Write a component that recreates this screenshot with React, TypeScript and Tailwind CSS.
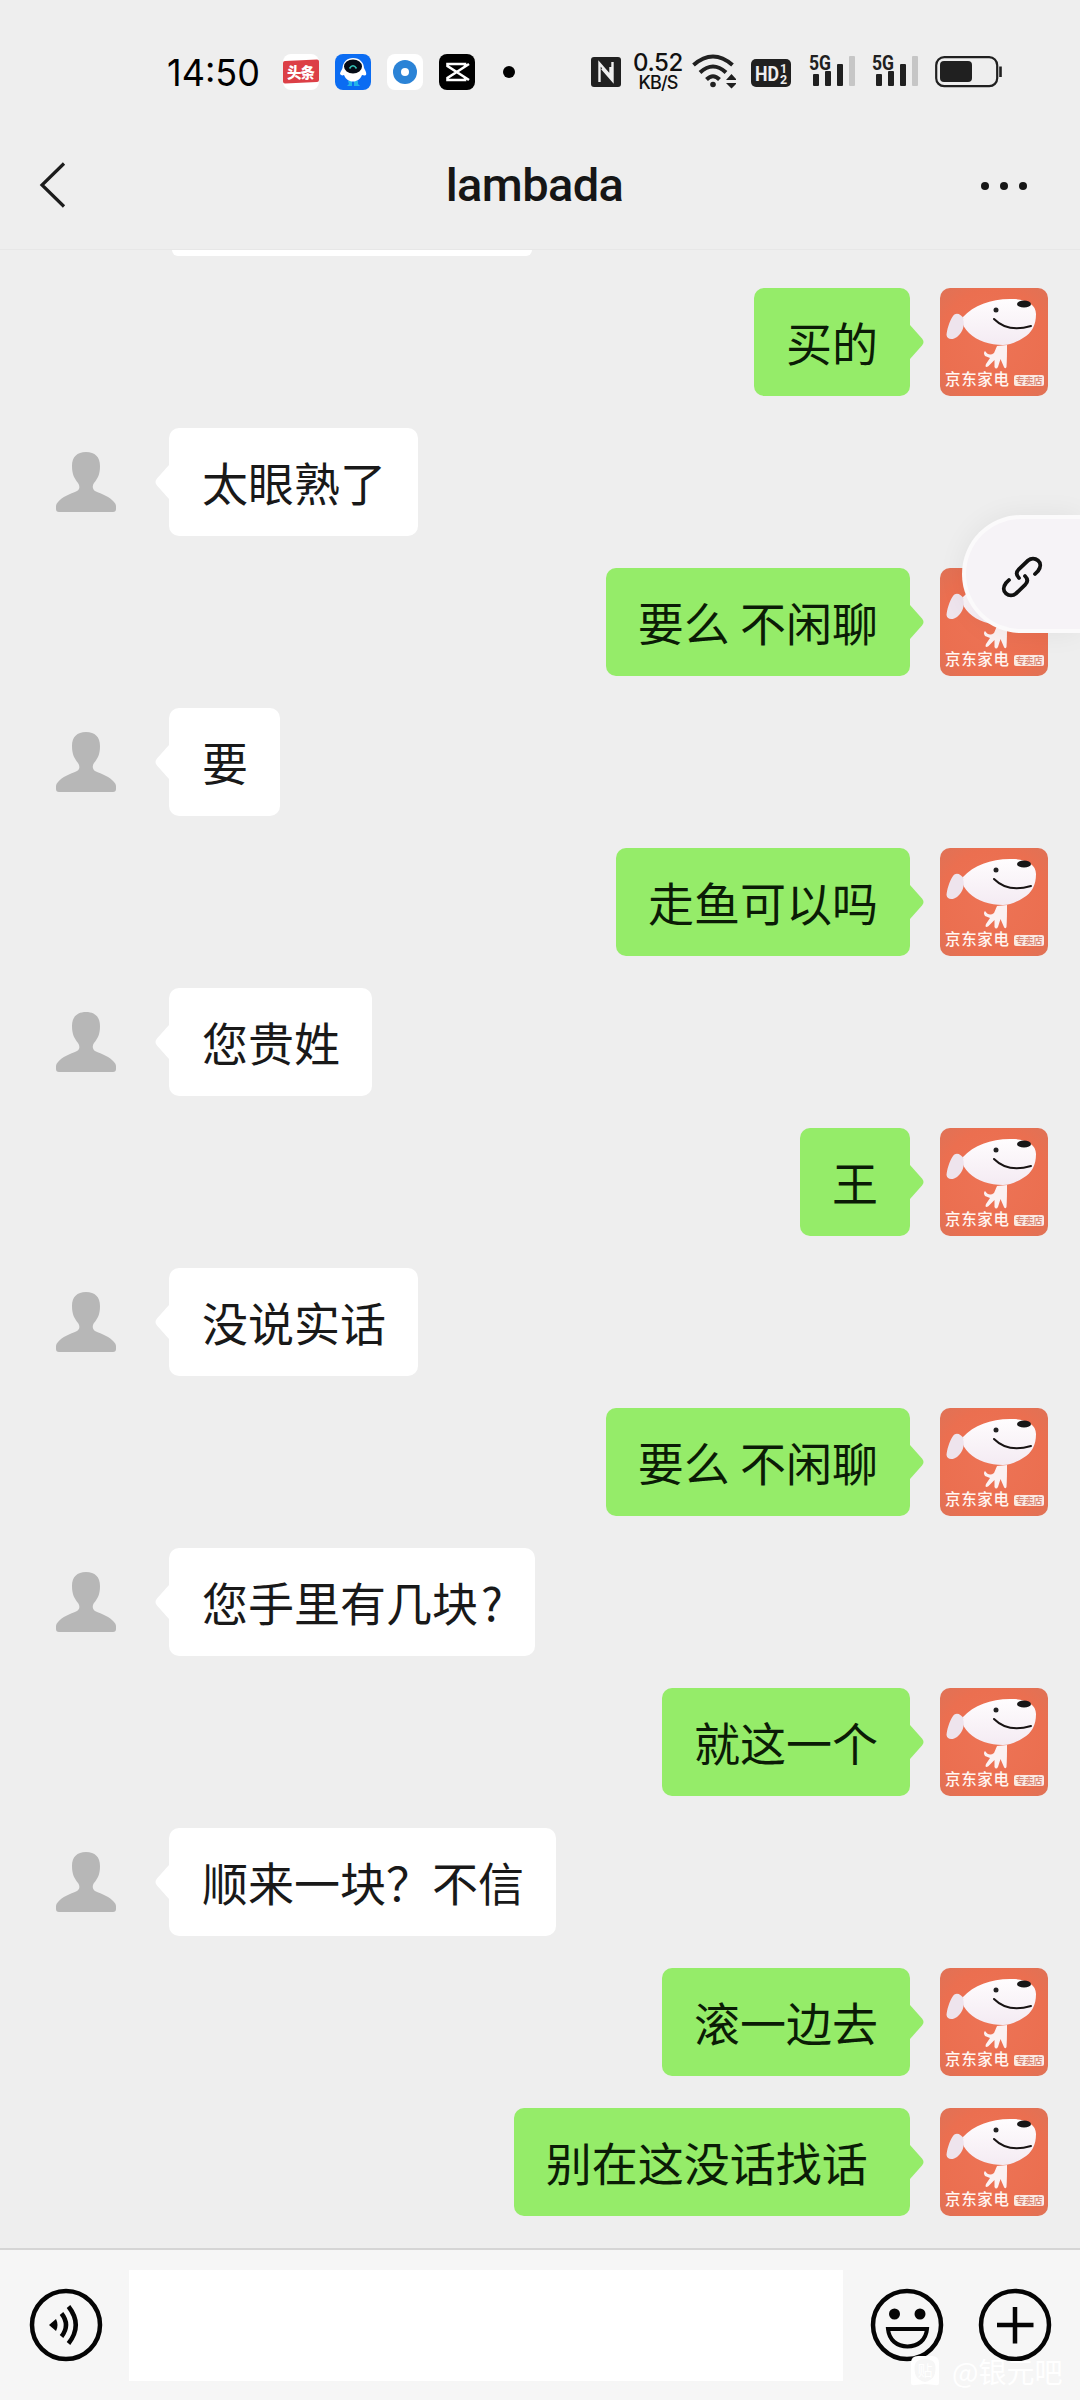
const messages = [
  { mine: true, text: "买的" },
  { mine: false, text: "太眼熟了" },
  { mine: true, text: "要么 不闲聊" },
  { mine: false, text: "要" },
  { mine: true, text: "走鱼可以吗" },
  { mine: false, text: "您贵姓" },
  { mine: true, text: "王" },
  { mine: false, text: "没说实话" },
  { mine: true, text: "要么 不闲聊" },
  { mine: false, text: "您手里有几块\u200a?" },
  { mine: true, text: "就这一个" },
  { mine: false, text: "顺来一块？不信" },
  { mine: true, text: "滚一边去" },
  { mine: true, text: "别在这没话找话\u00a0" },
];

function DogAvatar() {
  return (
    <svg viewBox="0 0 108 108" className="w-[108px] h-[108px] shrink-0 rounded-[10px]">
      <defs>
        <radialGradient id="coral" cx="50%" cy="50%" r="70%">
          <stop offset="0" stopColor="#ed7355" />
          <stop offset="0.7" stopColor="#eb6f50" />
          <stop offset="1" stopColor="#df7256" />
        </radialGradient>
        <linearGradient id="face" x1="0" y1="0" x2="0" y2="1">
          <stop offset="0" stopColor="#fffdfe" />
          <stop offset="1" stopColor="#f4ebf3" />
        </linearGradient>
      </defs>
      <rect width="108" height="108" fill="url(#coral)" />
      {/* cuerpo */}
      <path d="M57 58 L67 57 C67 65 67 72 66.500 79 Q65 82 63.500 78 L60.500 71 L58 79 Q56 82 54.500 79 L54.500 72 L48 78.500 Q44.500 80 46 76 L50 70 L45 68 Q43 65 45 63 Q49 69 54 65 Z" fill="#fbf1f2" />
      {/* cabeza */}
      <path d="M23 29 C34 17 52 10.500 72 11 C86 11 96 16 96 26 C96 37 92 45 83 50 C75 55 69 57 63 57 C50 57 37 53 29 45 C24 40 21 35 23 29 Z" fill="url(#face)" />
      {/* oreja */}
      <path d="M24 31 C21 26 16 24 13 28 C9 34 7 42 6.500 47 C7 52 13 52 17 49 C23 44 25 37 23 31 Z" fill="#eee4ed" />
      <ellipse cx="84" cy="16" rx="7" ry="3.600" fill="#171717" />
      <circle cx="56" cy="22" r="2.500" fill="#222" />
      <path d="M54 31 C64 41 78 42 91 38" fill="none" stroke="#191414" strokeWidth="2" strokeLinecap="round" />
      <text x="5" y="97" fontSize="15.500" fontWeight="500" textLength="64" fill="#fff6f2" fontFamily="Noto Sans CJK SC, sans-serif">京东家电</text>
      <rect x="74" y="87" width="30" height="11" rx="2" fill="#fbe9e2" />
      <text x="75.500" y="96" fontSize="9" fontWeight="700" textLength="27" fill="#d98875" fontFamily="Noto Sans CJK SC, sans-serif">专卖店</text>
    </svg>
  );
}

function PersonAvatar() {
  return (
    <div className="flex w-[108px] h-[108px] shrink-0 items-center justify-center">
      <svg viewBox="0 0 60 60" className="w-[60px] h-[60px]" fill="#b7b7b7">
        <path d="M30 0 C39 0 44 5 44 14 C44 22 42 26 38 31 C36 34 36.500 37 39 39 C46 42 54 45 58 50 Q60 52 60 54 V57 Q60 60 57 60 H3 Q0 60 0 57 V54 Q0 52 2 50 C6 45 14 42 21 39 C24 37 24 34 22 31 C18 26 16 22 16 14 C16 5 21 0 30 0 Z" />
      </svg>
    </div>
  );
}

function Message({ mine, text }: { mine: boolean; text: string }) {
  if (mine) {
    return (
      <div className="flex h-[108px] justify-end pr-8">
        <div className="flex items-center rounded-[10px] bg-[#95ec69] px-8 pb-[3px]">
          <span className="whitespace-pre text-[46px] leading-none text-[#0b1c06]">{text}</span>
        </div>
        <svg viewBox="0 0 14 108" className="mr-4 h-[108px] w-[14px] shrink-0" fill="#95ec69">
          <path d="M0 37 L12 50.500 Q15 54 12 57.500 L0 71 Z" />
        </svg>
        <DogAvatar />
      </div>
    );
  }
  return (
    <div className="flex h-[108px] pl-8">
      <PersonAvatar />
      <svg viewBox="0 0 14 108" className="ml-[15px] h-[108px] w-[14px] shrink-0" fill="#fff">
        <path d="M14 37 L2 50.500 Q-1 54 2 57.500 L14 71 Z" />
      </svg>
      <div className="flex items-center rounded-[10px] bg-white pl-[33px] pr-8 pb-[2px]">
        <span className="whitespace-pre text-[46px] leading-none text-[#191919]">{text}</span>
      </div>
    </div>
  );
}

function Signal() {
  return (
    <svg viewBox="0 0 48 44" className="h-11 w-12" fill="#202020">
      <text x="0" y="19.500" fontSize="20" fontWeight="700" textLength="22" lengthAdjust="spacingAndGlyphs" fontFamily="Roboto, sans-serif">5G</text>
      <rect x="4" y="24" width="6" height="12" rx="1" />
      <rect x="16" y="21" width="6" height="15" rx="1" />
      <rect x="28" y="14" width="6" height="22" rx="1" />
      <rect x="40" y="6" width="6" height="30" rx="1" fill="#c6c6c6" />
    </svg>
  );
}

function StatusBar() {
  return (
    <div className="flex h-[144px] items-center pl-[166px]">
      <svg viewBox="0 0 100 56" className="mr-[17px] h-14 w-[100px]">
        <text x="1" y="41.500" fontSize="36.500" fontWeight="400" textLength="93" lengthAdjust="spacingAndGlyphs" fontFamily="Inter, sans-serif">14:50</text>
      </svg>
      <svg viewBox="0 0 36 36" className="h-9 w-9">
        <rect width="36" height="36" rx="8" fill="#fff" />
        <path d="M2 7 L34 5.500 Q36 5.500 36 7.500 V26 Q36 28 34 28 L2 29.500 Q0 29.500 0 27.500 V9 Q0 7 2 7 Z" fill="#dc3f46" />
        <text x="4" y="23.500" fontSize="14.500" fontWeight="900" textLength="28" fill="#fff" fontFamily="Noto Sans CJK SC, sans-serif">头条</text>
      </svg>
      <svg viewBox="0 0 36 36" className="ml-4 h-9 w-9">
        <rect width="36" height="36" rx="8" fill="#0b6cf2" />
        <path d="M13 27 H17 V32 H12 L14 30 Z M19 27 H23 V30 L25 32 H19 Z" fill="#24b5e8" />
        <path d="M18 4 C25 4 29 9 29 14 C30 16 32 19 31 21 C30 22 28 21 27 21 C25 26 21 27.500 18 27.500 C15 27.500 11 26 9 21 C7 22 6 21 5 20 C5 18 7 16 7.500 14 C8 8 12 4 18 4 Z" fill="#fff" />
        <ellipse cx="18" cy="12.500" rx="9" ry="7" fill="#050b16" />
        <path d="M14.500 14.500 Q18 9 21.500 14.500" fill="none" stroke="#37c6b8" strokeWidth="1.600" />
      </svg>
      <svg viewBox="0 0 36 36" className="ml-4 h-9 w-9">
        <rect width="36" height="36" rx="8" fill="#fff" />
        <circle cx="18" cy="18" r="12" fill="#2b83d6" />
        <circle cx="18" cy="18" r="4" fill="#fff" />
      </svg>
      <svg viewBox="0 0 36 36" className="ml-4 h-9 w-9">
        <rect width="36" height="36" rx="8" fill="#000" />
        <path d="M30 10 L20 16.500 L8.500 24 V26 H26 V23.500 M30 26 L20 19.500 L8.500 12 V10 H26 V12.500" fill="none" stroke="#fff" strokeWidth="2.600" />
      </svg>
      <div className="ml-7 h-3 w-3 rounded-full bg-black"></div>

      <svg viewBox="0 0 30 30" className="ml-[76px] h-[30px] w-[30px]">
        <rect width="30" height="30" rx="3" fill="#202020" />
        <path d="M8.500 25 V6.500 L19.500 19 V10 M21.500 5 V23.500 L11 11.500" fill="none" stroke="#eee" strokeWidth="2.400" />
      </svg>
      <div className="ml-[10px] flex w-[54px] flex-col items-center text-[#111] font-medium font-['Inter',sans-serif]">
        <span className="text-[24px] leading-[22px] tracking-[-0.4px]">0.52</span>
        <span className="text-[18px] leading-[18px] tracking-[-0.9px]">KB/S</span>
      </div>
      <svg viewBox="0 0 44 36" className="ml-[7px] h-9 w-11" fill="none" stroke="#202020" strokeWidth="4">
        <path d="M1.500 11 Q21 -6 40.500 11 M8 18.500 Q21 6.500 34 18.500 M14.500 25.500 Q21 19 27.500 25.500" />
        <circle cx="21" cy="30.500" r="2.800" fill="#202020" stroke="none" />
        <path d="M39.500 20 L45 26 H34 Z M39.500 34.500 L34 29 H45 Z" fill="#202020" stroke="none" />
      </svg>
      <svg viewBox="0 0 40 28" className="relative top-px ml-[15px] h-7 w-10" fontFamily="Roboto, sans-serif" fontWeight="700" fill="#eee">
        <rect width="40" height="28" rx="5" fill="#202020" />
        <text x="4" y="22" fontSize="21" textLength="24" lengthAdjust="spacingAndGlyphs">HD</text>
        <text x="29" y="13.500" fontSize="12.500">1</text>
        <text x="29" y="24.500" fontSize="12.500">2</text>
      </svg>
      <div className="ml-[18px]"><Signal /></div>
      <div className="ml-[15px]"><Signal /></div>
      <svg viewBox="0 0 68 32" className="ml-[15px] h-8 w-[68px]">
        <rect x="1.200" y="1.200" width="61" height="29" rx="8" fill="none" stroke="#202020" strokeWidth="2.200" />
        <rect x="5" y="5" width="32" height="21" rx="4" fill="#202020" />
        <path d="M65.500 10.500 V21" stroke="#202020" strokeWidth="2.600" />
      </svg>
    </div>
  );
}

function Header() {
  return (
    <div className="flex h-[106px] items-start justify-between border-b border-[#e7e7e7] pl-[39px] pr-[53px]">
      <svg viewBox="0 0 28 48" className="mt-[17px] h-12 w-7">
        <path d="M25 2.500 L3 24 L25 45.500" fill="none" stroke="#1c1c1c" strokeWidth="3.200" />
      </svg>
      <h1 className="ml-[21px] mt-[13px] text-[47px] leading-[56px] font-medium tracking-[-0.6px] text-[#161616] font-['Roboto',sans-serif]">lambada</h1>
      <div className="mt-[38px] flex gap-[11px]">
        <span className="h-2 w-2 rounded-full bg-[#161616]"></span>
        <span className="h-2 w-2 rounded-full bg-[#161616]"></span>
        <span className="h-2 w-2 rounded-full bg-[#161616]"></span>
      </div>
    </div>
  );
}

function InputBar() {
  return (
    <div className="relative flex h-[152px] items-center border-t-2 border-[#d5d5d5] bg-[#f6f6f6] pl-[29px]">
      <svg viewBox="0 0 74 74" className="h-[74px] w-[74px]" fill="none" stroke="#050505" strokeWidth="4.500">
        <circle cx="37" cy="37" r="34" />
        <path d="M20 37 L27 31 Q30 37 27 43 Z" fill="#050505" stroke="none" />
        <path d="M32.500 25.500 Q41.500 37 32.500 48.500" strokeWidth="4.500" />
        <path d="M39.500 18.500 Q54 37 39.500 55.500" strokeWidth="4.500" />
      </svg>
      <div className="ml-[26px] h-[111px] w-[714px] bg-white"></div>
      <svg viewBox="0 0 74 74" className="ml-[27px] h-[74px] w-[74px]" fill="none" stroke="#050505" strokeWidth="4.500">
        <circle cx="37" cy="37" r="34" />
        <circle cx="24.500" cy="26" r="5.500" fill="#050505" stroke="none" />
        <circle cx="50" cy="26" r="5.500" fill="#050505" stroke="none" />
        <path d="M18 41 H57 C56 52 48 58.500 37.500 58.500 C27 58.500 19 52 18 41 Z" strokeWidth="4" />
      </svg>
      <svg viewBox="0 0 74 74" className="ml-[34px] h-[74px] w-[74px]" fill="none" stroke="#050505" strokeWidth="4.500">
        <circle cx="37" cy="37" r="34" />
        <path d="M37 19 V55.500 M19 37 H55.500" />
      </svg>
      <div className="absolute left-[910px] top-[105px] flex items-center gap-[12px] text-white">
        <svg viewBox="0 0 30 32" className="h-8 w-[30px]">
          <path d="M8 1 H22 Q29 1 29 8 V28 Q29 31 25 30 L15 29 L5 30 Q1 31 1 28 V8 Q1 1 8 1 Z" fill="#fff" />
          <path d="M15 4.500 C23 4.500 25.500 7 25.500 13 C25.500 21 23 25 15 27 C7 25 4.500 21 4.500 13 C4.500 7 7 4.500 15 4.500 Z" fill="#f6f6f6" />
          <text x="7.500" y="21" fontSize="15" fill="#fff" fontFamily="Noto Sans CJK SC, sans-serif">贴</text>
        </svg>
        <span className="text-[28px] leading-8">@银元吧</span>
      </div>
    </div>
  );
}

function FloatingLink() {
  return (
    <div className="absolute right-0 top-[515px] flex h-[118px] w-[118px] items-center rounded-l-full border-4 border-r-0 border-[#fbfafb] bg-[#f6f3f7] pl-[34px] shadow-[0_0_28px_rgba(0,0,0,0.06)]">
      <svg viewBox="0 0 44 44" className="relative top-[3px] h-11 w-11" fill="none" stroke="#111" strokeWidth="3.800" strokeLinecap="round">
        <path d="M35 19 L38 16 C41 12 41 8 38 5.500 C35 3 31 3 28 5.500 L19 14 C16 17 16 20 19 23" />
        <path d="M9 25 L6 28 C3 32 3 36 6 38.500 C9 41 13 41 16 38.500 L25 30 C28 27 28 24 25 21" />
      </svg>
    </div>
  );
}

export default function App() {
  return (
    <div className="relative flex h-[2400px] w-[1080px] flex-col overflow-hidden bg-[#eeeeee] font-['Noto_Sans_CJK_SC',sans-serif]">
      <StatusBar />
      <Header />
      <div className="flex flex-1 flex-col">
        <div className="ml-[172px] h-[6px] w-[360px] rounded-b-[6px] bg-white"></div>
        <div className="mt-8 flex flex-col gap-8">
          {messages.map((message, index) => (
            <Message key={index} mine={message.mine} text={message.text} />
          ))}
        </div>
      </div>
      <InputBar />
      <FloatingLink />
    </div>
  );
}
